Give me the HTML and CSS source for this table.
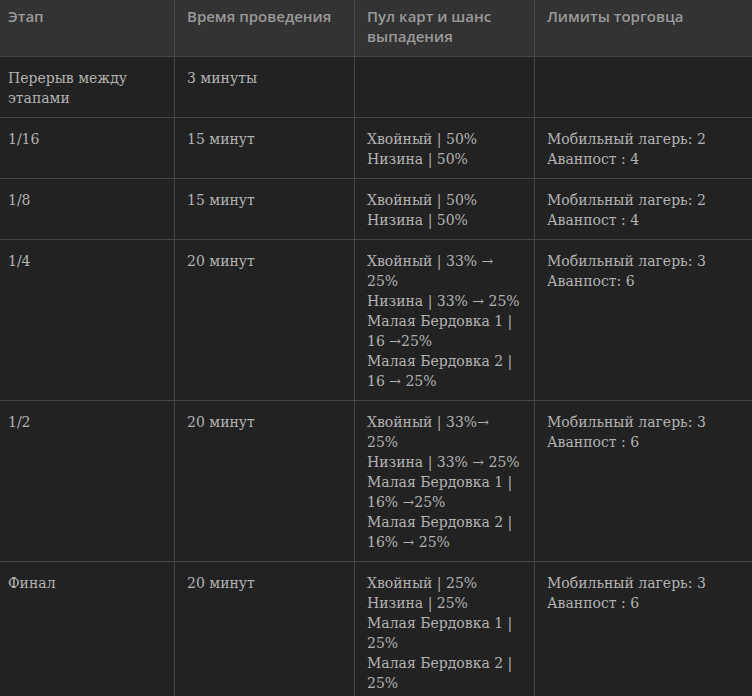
FILE: index.html
```html
<!DOCTYPE html>
<html lang="ru">
<head>
<meta charset="utf-8">
<link rel="stylesheet" href="styles.css">
</head>
<body>
<div class="wrap">
<table class="tbl">
<colgroup><col class="c1"><col class="c2"><col class="c3"><col class="c4"></colgroup>
<thead>
<tr><th>Этап</th><th>Время проведения</th><th>Пул карт и шанс выпадения</th><th>Лимиты торговца</th></tr>
</thead>
<tbody>
<tr><td>Перерыв между этапами</td><td>3 минуты</td><td></td><td></td></tr>
<tr><td>1/16</td><td>15 минут</td><td>Хвойный | 50%<br>Низина | 50%</td><td>Мобильный лагерь: 2<br>Аванпост : 4</td></tr>
<tr><td>1/8</td><td>15 минут</td><td>Хвойный | 50%<br>Низина | 50%</td><td>Мобильный лагерь: 2<br>Аванпост : 4</td></tr>
<tr><td>1/4</td><td>20 минут</td><td>Хвойный | 33% → 25%<br>Низина | 33% → 25%<br>Малая Бердовка 1 | 16 →25%<br>Малая Бердовка 2 | 16 → 25%</td><td>Мобильный лагерь: 3<br>Аванпост: 6</td></tr>
<tr><td>1/2</td><td>20 минут</td><td>Хвойный | 33%→ 25%<br>Низина | 33% → 25%<br>Малая Бердовка 1 | 16% →25%<br>Малая Бердовка 2 | 16% → 25%</td><td>Мобильный лагерь: 3<br>Аванпост : 6</td></tr>
<tr><td>Финал</td><td>20 минут</td><td>Хвойный | 25%<br>Низина | 25%<br>Малая Бердовка 1 | 25%<br>Малая Бердовка 2 | 25%</td><td>Мобильный лагерь: 3<br>Аванпост : 6</td></tr>
</tbody>
</table>
</div>
</body>
</html>
```
FILE: styles.css
```css
html, body {
  margin: 0;
  padding: 0;
  background: #222222;
  overflow: hidden;
}
.wrap {
  margin: -5px 0 0 -5px;
}
.tbl {
  border-collapse: collapse;
  table-layout: fixed;
  width: 839px;
}
.c1 { width: 179px; }
.c2, .c3 { width: 180px; }
.c4 { width: 300px; }
.tbl th, .tbl td {
  border: 1px solid #474747;
  padding: 10px 12px;
  vertical-align: top;
  text-align: left;
  line-height: 20px;
}
.tbl th {
  background: #333333;
  color: #9a9a9a;
  font-family: "Open Sans", "Noto Sans", sans-serif;
  font-weight: 600;
  font-size: 15px;
}
.tbl td {
  padding: 11px 12px 9px;
  background: #222222;
  color: #b3b3b3;
  font-family: "DejaVu Serif", serif;
  font-size: 14px;
}
```
